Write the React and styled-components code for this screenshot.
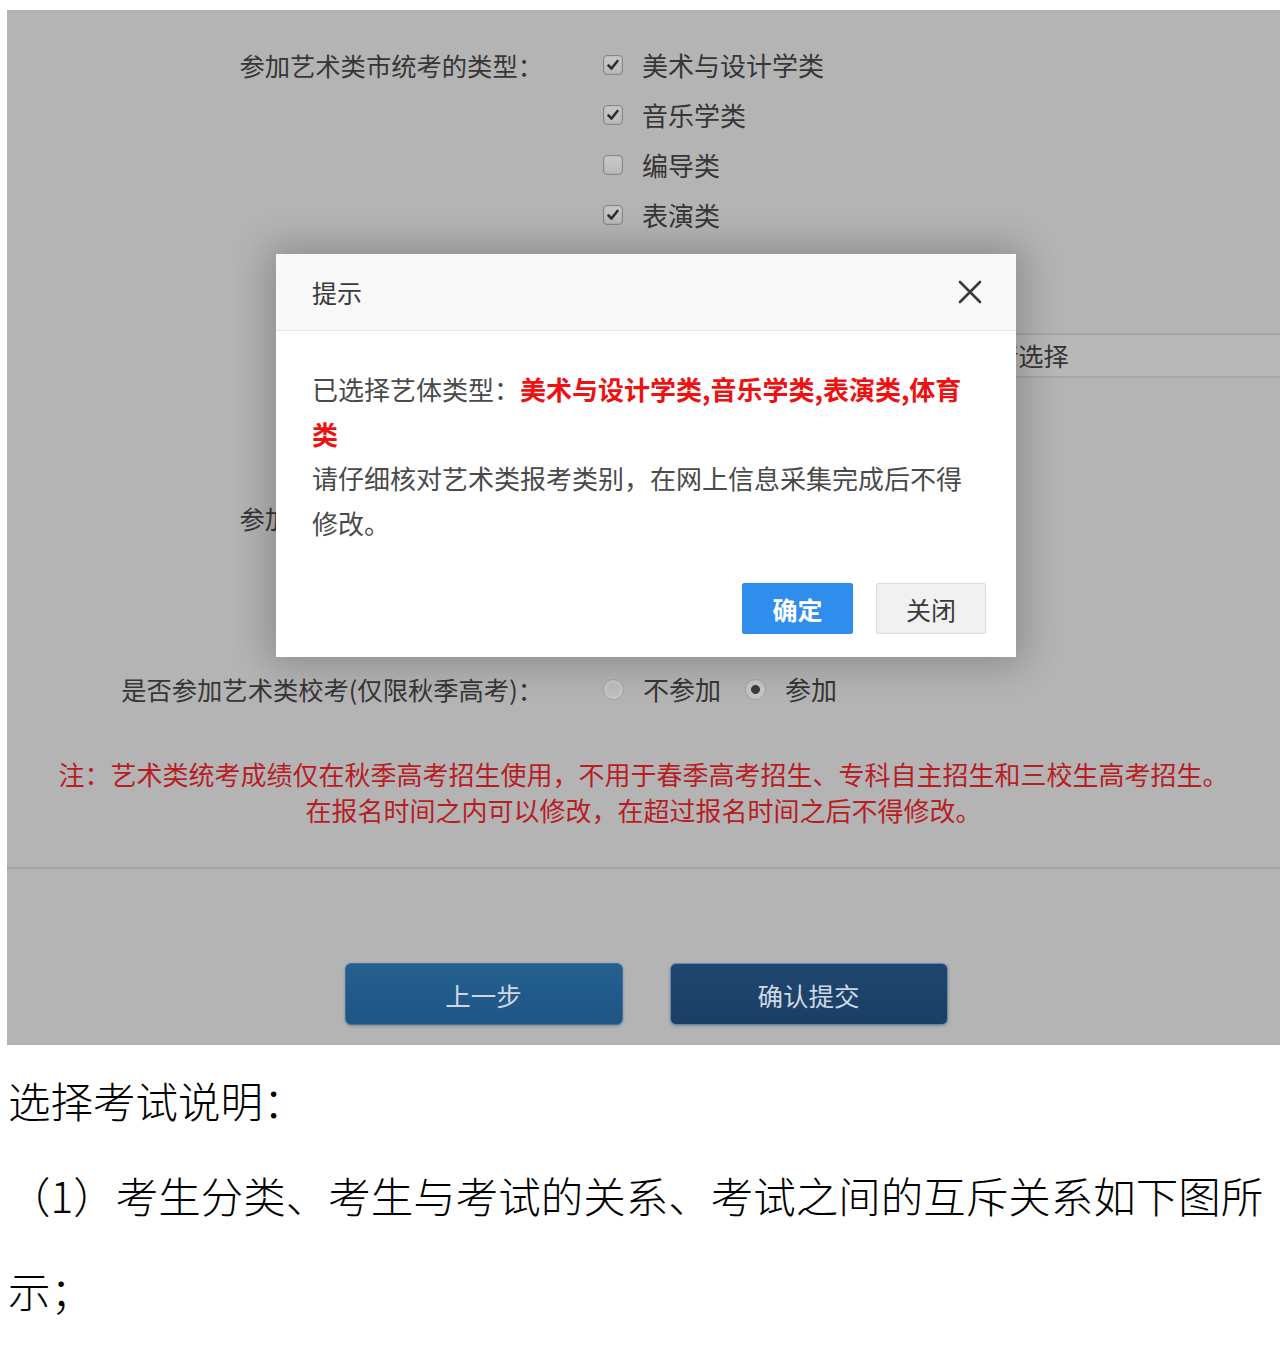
import React from 'react';
import styled, { createGlobalStyle } from 'styled-components';

const GlobalStyle = createGlobalStyle`
  body {
    margin: 0;
    background: #ffffff;
    font-family: 'Noto Sans CJK SC', 'Noto Sans', sans-serif;
  }
`;

const artTypes = [
  { name: '美术与设计学类', checked: true },
  { name: '音乐学类', checked: true },
  { name: '编导类', checked: false },
  { name: '表演类', checked: true },
];

const CheckMark = () => (
  <svg width="14" height="14" viewBox="0 0 14 14">
    <path d="M2.5 7.5 L5.5 10.5 L11.5 3" fill="none" stroke="#2f2f2f" strokeWidth="2.6" strokeLinecap="round" strokeLinejoin="round" />
  </svg>
);

const CloseIcon = () => (
  <svg width="24" height="24" viewBox="0 0 24 24">
    <path d="M2 2 L22 22 M22 2 L2 22" stroke="#3a3a3a" strokeWidth="2.6" strokeLinecap="round" />
  </svg>
);

const App = () => {
  return (
    <Page>
      <GlobalStyle />
      <Screen>
        <FormRow>
          <Label>参加艺术类市统考的类型：</Label>
          <OptionList>
            {artTypes.map((t) => (
              <Option key={t.name}>
                <CheckBox>{t.checked && <CheckMark />}</CheckBox>
                <OptionText>{t.name}</OptionText>
              </Option>
            ))}
          </OptionList>
        </FormRow>

        <FormRow $top={90}>
          <span />
          <FieldBand>请选择</FieldBand>
        </FormRow>

        <FormRow $top={115}>
          <Label>参加体育类市统考的类型：</Label>
          <InlineOptions>
            <Option>
              <Radio />
              <OptionText>不参加</OptionText>
            </Option>
            <Option>
              <Radio $checked />
              <OptionText>参加</OptionText>
            </Option>
          </InlineOptions>
        </FormRow>

        <FormRow $top={121}>
          <Label>是否参加艺术类校考(仅限秋季高考)：</Label>
          <InlineOptions>
            <Option>
              <Radio />
              <OptionText>不参加</OptionText>
            </Option>
            <Option>
              <Radio $checked />
              <OptionText>参加</OptionText>
            </Option>
          </InlineOptions>
        </FormRow>

        <Note>
          注：艺术类统考成绩仅在秋季高考招生使用，不用于春季高考招生、专科自主招生和三校生高考招生。
          <br />
          在报名时间之内可以修改，在超过报名时间之后不得修改。
        </Note>

        <Divider />

        <ButtonBar>
          <NavButton>上一步</NavButton>
          <NavButton $dark>确认提交</NavButton>
        </ButtonBar>

        <Modal>
          <ModalHeader>
            <ModalTitle>提示</ModalTitle>
            <CloseButton>
              <CloseIcon />
            </CloseButton>
          </ModalHeader>
          <ModalBody>
            <p>
              已选择艺体类型：<Highlight>美术与设计学类,音乐学类,表演类,体育类</Highlight>
            </p>
            <p>请仔细核对艺术类报考类别，在网上信息采集完成后不得修改。</p>
          </ModalBody>
          <ModalFooter>
            <DialogButton $primary>确定</DialogButton>
            <DialogButton>关闭</DialogButton>
          </ModalFooter>
        </Modal>
      </Screen>

      <Doc>
        <DocLine>选择考试说明：</DocLine>
        <DocLine>（1）考生分类、考生与考试的关系、考试之间的互斥关系如下图所示；</DocLine>
      </Doc>
    </Page>
  );
};

const Page = styled.div`
  padding-top: 10px;
`;

const Screen = styled.div`
  position: relative;
  margin-left: 7px;
  width: 1273px;
  padding: 30px 0 20px;
  box-sizing: border-box;
  background: #b4b4b4;
  color: #363636;
  font-size: 25.3px;
`;

const FormRow = styled.div`
  display: grid;
  grid-template-columns: 536px 1fr;
  column-gap: 60px;
  align-items: start;
  margin-top: ${(p) => p.$top || 0}px;
`;

const Label = styled.div`
  text-align: right;
  line-height: 50px;
  white-space: nowrap;
`;

const OptionList = styled.div`
  display: flex;
  flex-direction: column;
`;

const InlineOptions = styled.div`
  display: flex;
  gap: 24px;
`;

const Option = styled.div`
  display: flex;
  align-items: center;
  height: 50px;
  gap: 19px;
`;

const CheckBox = styled.span`
  width: 20px;
  height: 20px;
  box-sizing: border-box;
  display: flex;
  align-items: center;
  justify-content: center;
  border: 1px solid #878787;
  border-radius: 4px;
  background: linear-gradient(#c9c9c9, #b9b9b9);
  box-shadow: inset 0 0 2px rgba(0, 0, 0, 0.2);
`;

const Radio = styled.span`
  width: 21px;
  height: 21px;
  box-sizing: border-box;
  border-radius: 50%;
  border: 1px solid #a2a2a2;
  background: ${(p) =>
    p.$checked
      ? 'radial-gradient(circle, #3c3c3c 0 4px, #c6c6c6 5px)'
      : 'radial-gradient(circle, #bdbdbd 0 5px, #c8c8c8 9px)'};
`;

const OptionText = styled.span`
  line-height: 50px;
  font-size: 26px;
`;

const FieldBand = styled.div`
  height: 45px;
  box-sizing: border-box;
  margin-top: 3px;
  padding-left: 390px;
  line-height: 41px;
  border-top: 2px solid #a2a7ae;
  border-bottom: 2px solid #a2a7ae;
  background: #b8b8b8;
`;

const Note = styled.p`
  margin: 42px 0 0;
  text-align: center;
  line-height: 36px;
  font-size: 26px;
  color: #b81d24;
`;

const Divider = styled.div`
  margin-top: 39px;
  height: 2px;
  background: #9ea4ad;
`;

const ButtonBar = styled.div`
  display: flex;
  justify-content: center;
  gap: 47px;
  margin-top: 94px;
  padding-left: 5px;
`;

const NavButton = styled.button`
  width: 278px;
  height: 62px;
  border-radius: 6px;
  border: 1px solid ${(p) => (p.$dark ? '#6788ad' : '#3e6f9d')};
  background: ${(p) => (p.$dark ? 'linear-gradient(#1e4670, #1b3f65)' : 'linear-gradient(#24608f, #1f5585)')};
  color: #cfd8e2;
  font-family: inherit;
  font-size: 25.5px;
  box-shadow: 0 1px 3px rgba(0, 0, 0, 0.25);
`;

const Modal = styled.div`
  position: absolute;
  left: 269px;
  top: 244px;
  width: 740px;
  background: #ffffff;
  box-shadow: 0 0 36px 8px rgba(0, 0, 0, 0.22);
`;

const ModalHeader = styled.div`
  display: flex;
  align-items: center;
  justify-content: space-between;
  height: 76px;
  padding: 0 34px 0 36px;
  background: #f8f8f8;
  border-bottom: 1px solid #e6e6e6;
`;

const ModalTitle = styled.span`
  font-size: 25px;
  color: #3a3a3a;
`;

const CloseButton = styled.span`
  display: flex;
  width: 24px;
  height: 24px;
`;

const ModalBody = styled.div`
  padding: 36px 44px 0 36px;
  font-size: 26px;
  line-height: 44.5px;
  color: #4a4a4a;

  p {
    margin: 0;
  }
`;

const Highlight = styled.span`
  color: #ee1111;
  font-weight: bold;
`;

const ModalFooter = styled.div`
  display: flex;
  justify-content: flex-end;
  gap: 23px;
  padding: 38px 30px 23px;
`;

const DialogButton = styled.button`
  width: ${(p) => (p.$primary ? '111px' : '110px')};
  height: 51px;
  border-radius: 2px;
  border: 1px solid ${(p) => (p.$primary ? '#2e8ded' : '#dcdcdc')};
  background: ${(p) => (p.$primary ? '#2e8ded' : '#f1f1f1')};
  color: ${(p) => (p.$primary ? '#ffffff' : '#3a3a3a')};
  font-family: inherit;
  font-size: 25px;
  font-weight: ${(p) => (p.$primary ? 'bold' : 'normal')};
`;

const Doc = styled.div`
  padding: 7px 0 0 8px;
  font-size: 42.5px;
  font-weight: 300;
  line-height: 95px;
  color: #000000;
`;

const DocLine = styled.p`
  margin: 0;
`;

export default App;
